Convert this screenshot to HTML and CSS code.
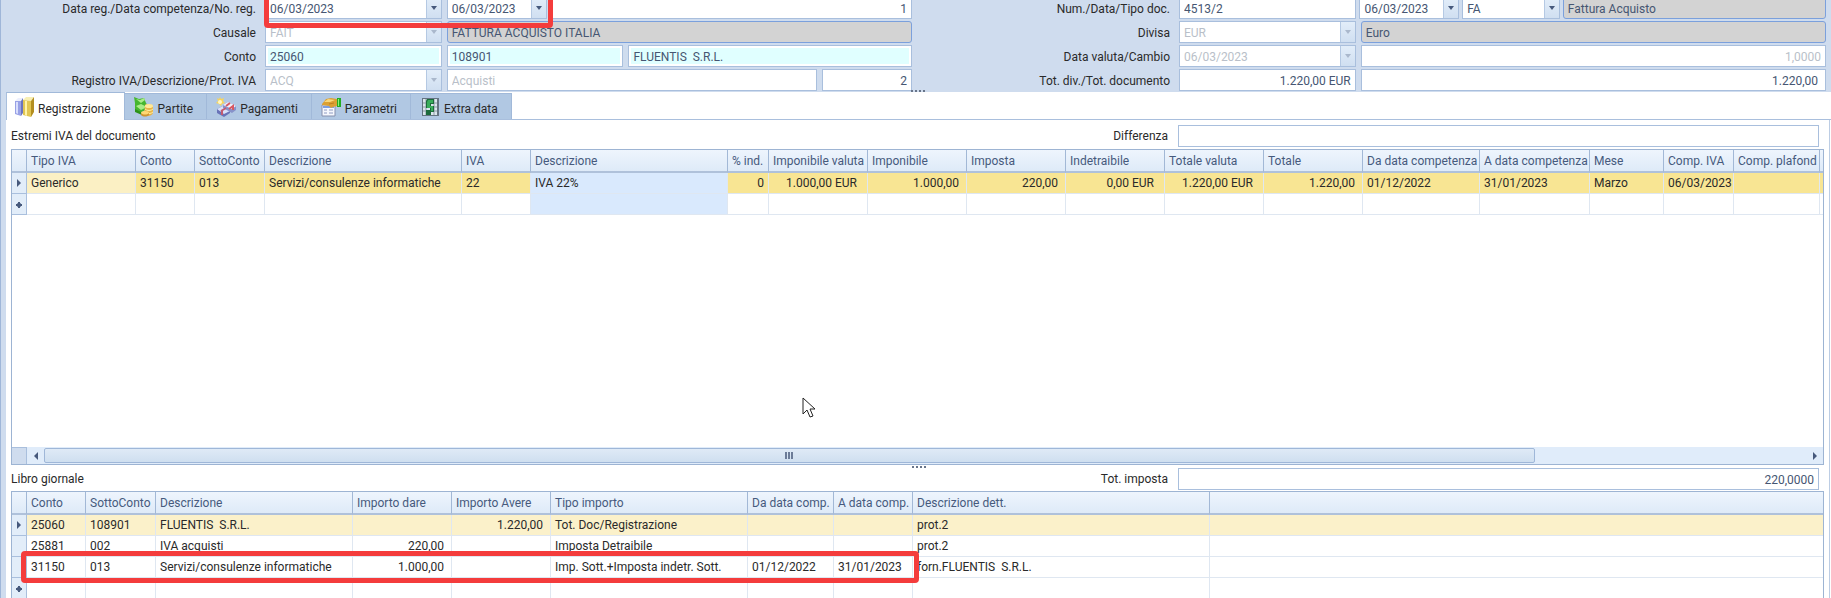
FILE: index.html
```html
<!DOCTYPE html>
<html lang="it">
<head>
<meta charset="utf-8">
<title>Registrazione contabile</title>
<link rel="stylesheet" href="styles.css">
</head>
<body>
<div class="app">
  <form class="form">
    <div class="half">
      <div class="row">
        <label class="label" for="datareg">Data reg./Data competenza/No. reg.</label>
        <div class="fields f-reg">
          <div class="combo"><input id="datareg" value="06/03/2023"><button type="button" class="drop" aria-label="Apri calendario"></button></div>
          <div class="combo"><input aria-label="Data competenza" value="06/03/2023"><button type="button" class="drop" aria-label="Apri calendario"></button></div>
          <input class="box num" aria-label="No. reg." value="1">
          <span class="mark mark-dates"></span>
        </div>
      </div>
      <div class="row">
        <label class="label" for="causale">Causale</label>
        <div class="fields f-two">
          <div class="combo off"><select id="causale" disabled><option>FAIT</option></select><span class="drop"></span></div>
          <input class="box grey" aria-label="Descrizione causale" value="FATTURA ACQUISTO ITALIA" readonly>
        </div>
      </div>
      <div class="row">
        <label class="label" for="conto">Conto</label>
        <div class="fields f-conto">
          <input class="box cyan" id="conto" value="25060">
          <input class="box cyan" aria-label="Sottoconto" value="108901">
          <input class="box cyan" aria-label="Ragione sociale" value="FLUENTIS  S.R.L.">
        </div>
      </div>
      <div class="row">
        <label class="label" for="registro">Registro IVA/Descrizione/Prot. IVA</label>
        <div class="fields f-iva">
          <div class="combo off"><select id="registro" disabled><option>ACQ</option></select><span class="drop"></span></div>
          <input class="box" aria-label="Descrizione registro" value="Acquisti" disabled>
          <input class="box num" aria-label="Prot. IVA" value="2">
        </div>
      </div>
    </div>
    <div class="half">
      <div class="row">
        <label class="label" for="numdoc">Num./Data/Tipo doc.</label>
        <div class="fields f-doc">
          <input class="box" id="numdoc" value="4513/2">
          <div class="combo"><input aria-label="Data doc." value="06/03/2023"><button type="button" class="drop" aria-label="Apri calendario"></button></div>
          <div class="combo"><select aria-label="Tipo doc."><option>FA</option></select><span class="drop"></span></div>
          <input class="box grey" aria-label="Descrizione tipo doc." value="Fattura Acquisto" readonly>
        </div>
      </div>
      <div class="row">
        <label class="label" for="divisa">Divisa</label>
        <div class="fields f-two">
          <div class="combo off"><select id="divisa" disabled><option>EUR</option></select><span class="drop"></span></div>
          <input class="box grey" aria-label="Descrizione divisa" value="Euro" readonly>
        </div>
      </div>
      <div class="row">
        <label class="label" for="valuta">Data valuta/Cambio</label>
        <div class="fields f-two">
          <div class="combo off"><input id="valuta" value="06/03/2023" disabled><button type="button" class="drop" aria-label="Apri calendario" disabled></button></div>
          <input class="box num" aria-label="Cambio" value="1,0000" disabled>
        </div>
      </div>
      <div class="row">
        <label class="label" for="totdiv">Tot. div./Tot. documento</label>
        <div class="fields f-two">
          <input class="box num" id="totdiv" value="1.220,00 EUR">
          <input class="box num wide-pad" aria-label="Tot. documento" value="1.220,00">
        </div>
      </div>
    </div>
    <span class="dots"><i></i><i></i><i></i><i></i></span>
  </form>

  <main class="main">
    <nav class="tabs" role="tablist">
      <button class="tab active" role="tab" aria-selected="true">
        <svg class="icon" viewBox="0 0 20 20"><path d="M1 4 4 1h5L7 4z" fill="#eceffd"/><path d="M1 4h6v15l-6-2z" fill="#98a1e6"/><path d="M2 5h2v12l-2-1z" fill="#d9defc"/><path d="M7 4l2-3v15l-2 3z" fill="#6b74bd"/><path d="M9 3 12 0h8l-3 4z" fill="#f8efb4"/><path d="M9 3l8 1v16l-8-2z" fill="#e2c653"/><path d="M11 4h2v15l-2-1z" fill="#fff3a8"/><path d="M17 4l3-4v15l-3 5z" fill="#b38e20"/></svg>
        Registrazione</button>
      <button class="tab" role="tab">
        <svg class="icon" viewBox="0 0 20 20"><path d="M1 6 0 0l5 2 5-1 2 5 3 4-8 6-6-2z" fill="#45b62f"/><path d="M2 2l5 4 4-3-1-2-4 2zM2 9l5-2 6 3-6 3z" fill="#a9ec87"/><path d="M1 12l6 3 1 3-7-3z" fill="#2c9219"/><path d="M11 8c2-2 7-1 8 1v7c-1 3-6 4-9 2z" fill="#e8b448"/><ellipse cx="15" cy="9" rx="4" ry="2" fill="#ffe99a"/><path d="M11 12c2 2 6 2 8 0M11 15c2 2 6 2 8 0" stroke="#fff0a6" fill="none"/><ellipse cx="11" cy="16" rx="4" ry="2" fill="#ffd873"/><path d="M7 16v2c2 2 6 2 8 0v-2c-2 2-6 2-8 0z" fill="#cf9430"/></svg>
        Partite</button>
      <button class="tab" role="tab">
        <svg class="icon" viewBox="0 0 20 20"><path d="M4 0l1 2 3-1-1 3 2 2-3 1-1 2-2-2-3-1 2-2-1-3 2 1z" fill="#f7d45d"/><circle cx="4" cy="5" r="2" fill="#fff7c5"/><path d="M1 12l6-3 7 5v2l-6 4-7-4z" fill="#6873b8"/><path d="M1 12l6-3 7 5-6 3z" fill="#d9e0fa"/><path d="M7 8l5-3 8 4v4l-4 3-9-5z" fill="#8792c9"/><path d="M7 8l5-3 8 4-4 3z" fill="#eef1fc"/><path d="M14 6l-4 3M13 12l4-3v4" stroke="#d85862" stroke-width="2" fill="none"/><path d="M5 14l5-3M6 14v4" stroke="#c35a70" stroke-width="2" fill="none"/></svg>
        Pagamenti</button>
      <button class="tab" role="tab">
        <svg class="icon" viewBox="0 0 20 20"><path d="M1 8h13v11H1z" fill="#f5f7fd" stroke="#8590ae"/><path d="M2 9h11v2H2z" fill="#7b9ee0"/><path d="M3 13h3m2 0h4M3 16h3m2 0h4" stroke="#8f9cc2"/><path d="M16 1h4v9h-4z" fill="#22ad22"/><path d="M17 2h1v7h-1z" fill="#8cee77"/><path d="M1 7l4-5 5-1 6 1v7l-4 1-2 1-2-2-7-1z" fill="#dba032"/><path d="M3 5l4-3 7 1-5 2z" fill="#f8d77a"/><path d="M8 7l5-1" stroke="#bd7f20"/></svg>
        Parametri</button>
      <button class="tab" role="tab">
        <svg class="icon" viewBox="0 0 20 20"><path d="M2 1h17v18H2z" fill="#657482"/><path d="M3 2h14v16H3z" fill="#dbe6ed"/><path d="M3 6h14M3 10h14M3 14h14M6 2v16M14 2v16" stroke="#8e9ca6"/><path d="M7 2h7v5h-3v2h3v6h-3v3H6v-5h4v-2H6V4z" fill="#1d6b3c"/><path d="M8 3h5v3h-3v3h3v5h-2v-3H7V5z" fill="#39ad5b"/></svg>
        Extra data</button>
    </nav>

    <section class="panel">
      <div class="bar">
        <h2 class="title">Estremi IVA del documento</h2>
        <label class="bar-label" for="diff">Differenza</label>
        <input class="box bar-box" id="diff" value="">
      </div>
      <div class="grid grid-iva">
        <table class="table">
          <colgroup><col class="w15"><col class="w109"><col class="w59"><col class="w70"><col class="w197"><col class="w69"><col class="w197"><col class="w41"><col class="w99"><col class="w99"><col class="w99"><col class="w99"><col class="w99"><col class="w99"><col class="w117"><col class="w110"><col class="w74"><col class="w70"><col class="w86"><col></colgroup>
          <thead><tr><th></th><th>Tipo IVA</th><th>Conto</th><th>SottoConto</th><th>Descrizione</th><th>IVA</th><th>Descrizione</th><th>% ind.</th><th>Imponibile valuta</th><th>Imponibile</th><th>Imposta</th><th>Indetraibile</th><th>Totale valuta</th><th>Totale</th><th>Da data competenza</th><th>A data competenza</th><th>Mese</th><th>Comp. IVA</th><th>Comp. plafond</th><th></th></tr></thead>
          <tbody>
            <tr class="gold"><td class="ind"><span class="arrow"></span></td><td class="pale">Generico</td><td>31150</td><td>013</td><td>Servizi/consulenze informatiche</td><td>22</td><td class="sky">IVA 22%</td><td class="n tight">0</td><td class="n cur">1.000,00 EUR</td><td class="n">1.000,00</td><td class="n">220,00</td><td class="n cur">0,00 EUR</td><td class="n cur">1.220,00 EUR</td><td class="n">1.220,00</td><td>01/12/2022</td><td>31/01/2023</td><td>Marzo</td><td>06/03/2023</td><td></td><td></td></tr>
            <tr><td class="ind"><span class="star"></span></td><td></td><td></td><td></td><td></td><td></td><td class="sky"></td><td></td><td></td><td></td><td></td><td></td><td></td><td></td><td></td><td></td><td></td><td></td><td></td><td></td></tr>
          </tbody>
        </table>
        <svg class="cursor" viewBox="0 0 14 21"><path d="M1 1v16l4-4 3 7 3-1-3-7h5z" fill="#fff" stroke="#222"/></svg>
        <div class="scroll">
          <span class="corner"></span>
          <button class="sbtn" aria-label="Scorri a sinistra"><span class="arrow left"></span></button>
          <div class="track"><div class="thumb"><i></i><i></i><i></i></div></div>
          <button class="sbtn" aria-label="Scorri a destra"><span class="arrow"></span></button>
        </div>
      </div>

      <div class="bar bar-low">
        <h2 class="title">Libro giornale</h2>
        <label class="bar-label" for="totimp">Tot. imposta</label>
        <input class="box bar-box num" id="totimp" value="220,0000">
        <span class="dots"><i></i><i></i><i></i><i></i></span>
      </div>
      <div class="grid grid-log">
        <table class="table">
          <colgroup><col class="w15"><col class="w59"><col class="w70"><col class="w197"><col class="w99"><col class="w99"><col class="w197"><col class="w86"><col class="w79"><col class="w297"><col></colgroup>
          <thead><tr><th></th><th>Conto</th><th>SottoConto</th><th>Descrizione</th><th>Importo dare</th><th>Importo Avere</th><th>Tipo importo</th><th>Da data comp.</th><th>A data comp.</th><th>Descrizione dett.</th><th></th></tr></thead>
          <tbody>
            <tr class="cream"><td class="ind"><span class="arrow"></span></td><td>25060</td><td>108901</td><td>FLUENTIS&nbsp; S.R.L.</td><td></td><td class="n">1.220,00</td><td>Tot. Doc/Registrazione</td><td></td><td></td><td>prot.2</td><td></td></tr>
            <tr><td class="ind"></td><td>25881</td><td>002</td><td>IVA acquisti</td><td class="n">220,00</td><td></td><td>Imposta Detraibile</td><td></td><td></td><td>prot.2</td><td></td></tr>
            <tr><td class="ind"></td><td>31150</td><td>013</td><td>Servizi/consulenze informatiche</td><td class="n">1.000,00</td><td></td><td>Imp. Sott.+Imposta indetr. Sott.</td><td>01/12/2022</td><td>31/01/2023</td><td>forn.FLUENTIS&nbsp; S.R.L.</td><td></td></tr>
            <tr><td class="ind"><span class="star"></span></td><td></td><td></td><td></td><td></td><td></td><td></td><td></td><td></td><td></td><td></td></tr>
          </tbody>
        </table>
        <span class="mark mark-row"></span>
      </div>
    </section>
  </main>
</div>
</body>
</html>
```
FILE: styles.css
```css
* { box-sizing: border-box; }

body {
  margin: 0;
  background: #cfdcee;
  color: #2a2a2a;
  font: 12px/16px Roboto, "Open Sans", sans-serif;
}

input, select, button {
  font: inherit;
  color: inherit;
  margin: 0;
  padding: 0;
  border: 0;
  border-radius: 0;
  background: none;
  min-width: 0;
}

.app {
  height: 100vh;
  display: flex;
  flex-direction: column;
  overflow: hidden;
  border-left: 1px solid #9fb6d8;
}

/* header form */
.form {
  position: relative;
  display: grid;
  grid-template-columns: 1fr 1fr;
  column-gap: 3px;
  margin-top: -3px;
  padding: 0 5px 1px 0;
}
.half { display: flex; flex-direction: column; gap: 2px; }
.row {
  display: grid;
  grid-template-columns: 264px 1fr;
  height: 22px;
}
.label {
  padding: 1px 9px 0 0;
  text-align: right;
  line-height: 22px;
  white-space: nowrap;
}
.fields {
  position: relative;
  display: grid;
  column-gap: 5px;
}
.f-reg { grid-template-columns: 177fr 100fr 361fr; }
.f-two { grid-template-columns: 177fr 466fr; }
.f-conto { grid-template-columns: 177fr 177fr 284fr; }
.f-iva { grid-template-columns: 177fr 371fr 90fr; }
.f-doc { grid-template-columns: 178fr 100fr 98fr 264fr; column-gap: 3px; }

.box, .combo {
  width: 100%;
  height: 22px;
  border: 1px solid #a9bfdd;
  background: #fff;
  color: #465672;
}
.box { padding: 1px 4px 0; }
.box:disabled, .off, .off select, .off input { color: #b9bfc9; opacity: 1; }
.num { text-align: right; }
.wide-pad { padding-right: 7px; }
.cyan { background: #e0ffff; box-shadow: inset 0 0 0 2px #fff; }
.grey { background: #d3d3d3; border-color: #7ba0dc; border-radius: 3px; }

.combo { display: flex; }
.combo input, .combo select {
  flex: 1;
  width: 0;
  padding: 1px 0 0 4px;
  appearance: none;
}
.drop {
  flex: 0 0 15px;
  display: flex;
  align-items: center;
  justify-content: center;
  border-left: 1px solid #b5c9e3;
  background: linear-gradient(#e2edf9, #d0dff1);
}
.drop::before {
  content: "";
  border: 3px solid transparent;
  border-top: 4px solid #46597c;
  border-bottom: 0;
}
.off .drop::before { border-top-color: #aab8cc; }

.dots {
  position: absolute;
  left: 50%;
  bottom: 0;
  display: flex;
  gap: 2px;
  margin-left: -5px;
}
.dots i { width: 2px; height: 2px; background: #68758a; }

.mark {
  position: absolute;
  border: 5px solid #f43c3c;
  border-radius: 4px;
  pointer-events: none;
}
.mark-dates { left: -1px; top: -4px; width: 289px; height: 35px; z-index: 1; }
.mark-row { left: 9px; top: 59px; width: 898px; height: 32px; }

/* tabs */
.main {
  flex: 1;
  min-height: 0;
  display: flex;
  flex-direction: column;
  margin-left: 5px;
  background: #fff;
}
.tabs {
  display: flex;
  align-items: flex-end;
  height: 28px;
  border-bottom: 1px solid #a9bfdd;
}
.tab {
  display: flex;
  align-items: center;
  gap: 4px;
  height: 26px;
  padding: 4px 13px 0 9px;
  background: #b1c8e3;
  border: 1px solid #a1b9d9;
  border-left: 0;
  border-bottom: 0;
}
.tab.active {
  height: 28px;
  margin-bottom: -1px;
  padding-left: 7px;
  background: #fff;
  border-left: 1px solid #a9bfdd;
}
.icon { width: 20px; height: 20px; margin-top: -4px; }

/* panel */
.panel {
  flex: 1;
  min-height: 0;
  display: flex;
  flex-direction: column;
  margin-right: 1px;
  padding: 4px 5px 0;
  border-right: 1px solid #bccde4;
}
.bar {
  position: relative;
  display: grid;
  grid-template-columns: 1fr 300px 641px;
  align-items: center;
  padding: 1px 5px 2px 0;
}
.title { margin: 0; font: inherit; }
.bar-label { padding-right: 10px; text-align: right; }
.bar-low { padding: 3px 5px 1px 0; }
.bar-low .dots { top: 1px; bottom: auto; margin-left: -6px; }

.grid {
  position: relative;
  border: 1px solid #9db4d3;
  background: #fff;
  overflow: hidden;
}
.grid-iva { flex: 1; display: flex; flex-direction: column; }
.grid-log { flex: 0 0 107px; border-bottom: 0; }

.table {
  width: 100%;
  table-layout: fixed;
  border-collapse: separate;
  border-spacing: 0;
}
.w15 { width: 15px; }
.w41 { width: 41px; }
.w59 { width: 59px; }
.w69 { width: 69px; }
.w70 { width: 70px; }
.w74 { width: 74px; }
.w79 { width: 79px; }
.w86 { width: 86px; }
.w99 { width: 99px; }
.w109 { width: 109px; }
.w110 { width: 110px; }
.w117 { width: 117px; }
.w197 { width: 197px; }
.w297 { width: 297px; }

th, td {
  padding: 0 0 0 4px;
  overflow: hidden;
  white-space: nowrap;
  text-align: left;
  font-weight: 400;
}
th {
  height: 23px;
  color: #465a7d;
  background: linear-gradient(#eef5fd, #deeaf8);
  border-right: 1px solid #a2b8d6;
  border-bottom: 2px solid #afc1da;
}
th:last-child { border-right: 0; }
td {
  height: 21px;
  border-right: 1px solid #dfe7f1;
  border-bottom: 1px solid #dfe7f1;
}
td:last-child { border-right: 0; }
td.n { padding: 0 7px 0 0; text-align: right; }
td.cur { padding-right: 10px; }
td.tight { padding-right: 4px; }
td.ind {
  padding: 0;
  text-align: center;
  background: #e2edf9;
  border-color: #a9bfdd;
}
.gold td { background: #f8e593; }
.gold td.pale { background: #fbf0c4; }
.cream td { background: #fbf1ca; }
.gold td.ind, .cream td.ind { background: #e2edf9; }
.gold td.sky, td.sky { background: #d9e9fd; }

.arrow {
  display: inline-block;
  border: 4px solid transparent;
  border-left: 4px solid #46597c;
  border-right: 0;
}
.arrow.left { border-right: 4px solid #46597c; border-left: 0; }
.star {
  display: inline-block;
  width: 6px;
  height: 6px;
  background:
    linear-gradient(#46597c, #46597c) center / 6px 2px no-repeat,
    linear-gradient(#46597c, #46597c) center / 2px 6px no-repeat,
    linear-gradient(#7f8dab, #7f8dab) center / 4px 4px no-repeat;
}

.cursor {
  position: absolute;
  left: 790px;
  top: 247px;
  width: 14px;
  height: 21px;
}

.scroll {
  display: flex;
  height: 17px;
  margin-top: auto;
  background: #e0ecfa;
}
.corner {
  width: 15px;
  background: #cfdcee;
  border: 1px solid #a9bfdd;
  border-left: 0;
  border-bottom: 0;
}
.sbtn {
  width: 17px;
  display: flex;
  align-items: center;
  justify-content: center;
}
.track { flex: 1; padding: 1px 0; }
.thumb {
  display: flex;
  align-items: center;
  justify-content: center;
  gap: 1px;
  width: 84.6%;
  height: 15px;
  border: 1px solid #9fb7d8;
  border-radius: 2px;
  background: linear-gradient(#dfeaf6, #cfdff0);
}
.thumb i { width: 2px; height: 7px; background: #6c7c98; }
```
